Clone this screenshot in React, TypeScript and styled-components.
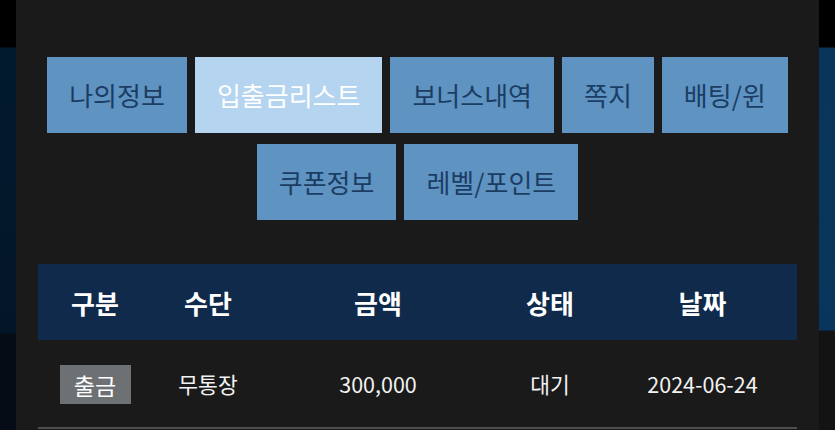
import styled, { createGlobalStyle } from "styled-components";

const GlobalStyle = createGlobalStyle`
  html, body {
    margin: 0;
    padding: 0;
    background: #141414;
  }
  body {
    font-family: "Noto Sans CJK KR", "Noto Sans", sans-serif;
  }
`;

const tabs = [
  { label: "나의정보" },
  { label: "입출금리스트", active: true },
  { label: "보너스내역" },
  { label: "쪽지" },
  { label: "배팅/윈" },
  { label: "쿠폰정보" },
  { label: "레벨/포인트" },
];

const columns = ["구분", "수단", "금액", "상태", "날짜"];

const rows = [
  { kind: "출금", method: "무통장", amount: "300,000", status: "대기", date: "2024-06-24" },
];

const Page = styled.div`
  display: flex;
  width: 835px;
  height: 430px;
  overflow: hidden;
`;

const Edge = styled.div<{ $side: "left" | "right" }>`
  width: 16px;
  flex-shrink: 0;
  background: ${(p) =>
    p.$side === "left"
      ? "linear-gradient(to bottom, #000 0, #000 47px, #021a2e 48px, #031628 333px, #050c16 334px, #050c16 100%)"
      : "linear-gradient(to bottom, #000 0, #000 47px, #0a355a 48px, #07365c 330px, #131313 331px, #131313 100%)"};
`;

const Panel = styled.main`
  flex: 1;
  background: #1a1a1a;
  padding-top: 57px;
  display: flex;
  flex-direction: column;
`;

const TabNav = styled.nav`
  display: flex;
  flex-wrap: wrap;
  justify-content: center;
  gap: 11px 8px;
  padding: 0 30px;
`;

const Tab = styled.button<{ $active?: boolean }>`
  height: 76px;
  padding: 0 22px;
  border: none;
  border-radius: 0;
  background: ${(p) => (p.$active ? "#b4d4f0" : "#5e93c2")};
  color: ${(p) => (p.$active ? "#ffffff" : "#1c3d63")};
  font-family: inherit;
  font-size: 26px;
  line-height: 1;
  cursor: pointer;
`;

const Table = styled.div`
  margin: 44px 22px 0;
`;

const Grid = styled.div`
  display: grid;
  grid-template-columns: 114px 112px 228px 116px 189px;
  align-items: center;
  justify-items: center;
`;

const HeadRow = styled(Grid)`
  height: 76px;
  background: #0f2a4a;
  color: #ffffff;
  font-size: 26px;
  font-weight: 700;
`;

const BodyRow = styled(Grid)`
  height: 87px;
  border-bottom: 2px solid #4e4e4e;
  color: #f2f2f2;
  font-size: 21.5px;
`;

const Badge = styled.span`
  display: inline-flex;
  align-items: center;
  justify-content: center;
  width: 71px;
  height: 39px;
  margin-top: 2px;
  background: #6d7173;
  color: #ffffff;
  font-size: 23px;
`;

export default function App() {
  return (
    <>
      <GlobalStyle />
      <Page>
        <Edge $side="left" />
        <Panel>
          <TabNav>
            {tabs.map((t) => (
              <Tab key={t.label} $active={t.active}>
                {t.label}
              </Tab>
            ))}
          </TabNav>
          <Table>
            <HeadRow>
              {columns.map((c) => (
                <span key={c}>{c}</span>
              ))}
            </HeadRow>
            {rows.map((r, i) => (
              <BodyRow key={i}>
                <Badge>{r.kind}</Badge>
                <span>{r.method}</span>
                <span>{r.amount}</span>
                <span>{r.status}</span>
                <span>{r.date}</span>
              </BodyRow>
            ))}
          </Table>
        </Panel>
        <Edge $side="right" />
      </Page>
    </>
  );
}
